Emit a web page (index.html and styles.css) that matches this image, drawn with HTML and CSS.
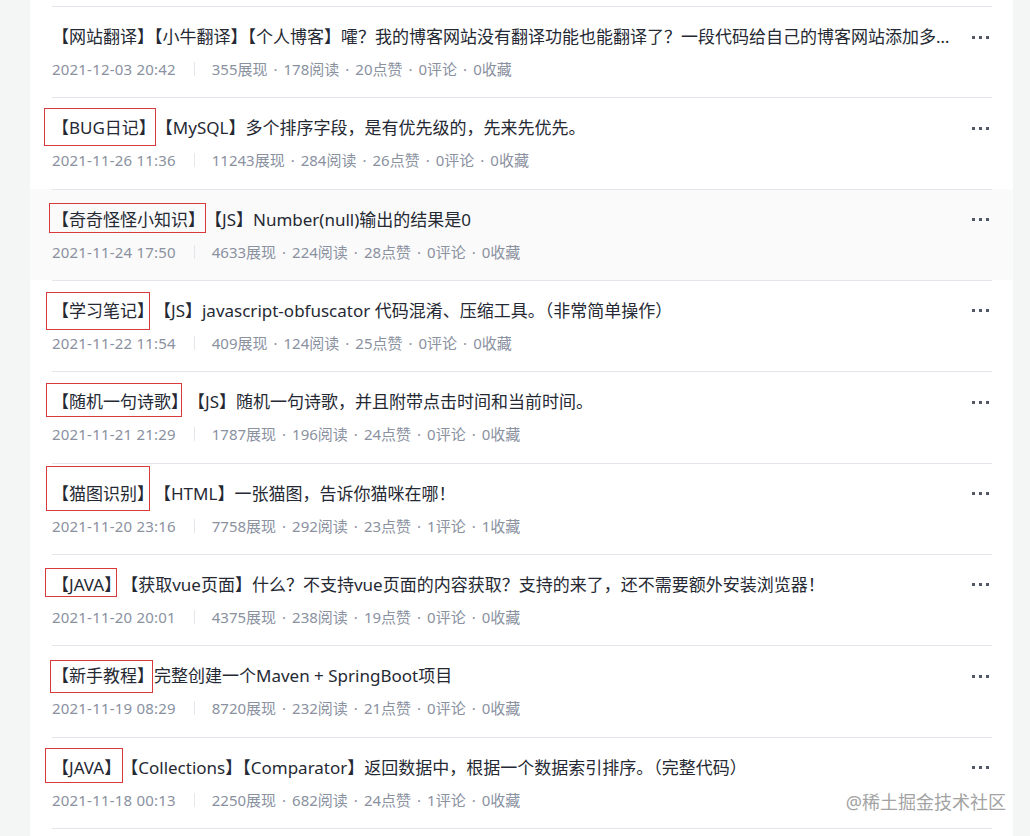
FILE: index.html
```html
<!DOCTYPE html>
<html lang="zh-CN">
<head>
  <meta charset="UTF-8">
  <meta name="viewport" content="width=device-width, initial-scale=1.0">
  <title>文章列表</title>
  <link rel="stylesheet" href="styles.css">
</head>
<body>
  <div class="page">
    <div class="card">
      <ul class="entry-list">
        <li class="entry">
          <div class="entry-inner">
            <div class="entry-title">
              <span class="title-text clamp">【网站翻译】【小牛翻译】【个人博客】嚯？我的博客网站没有翻译功能也能翻译了？一段代码给自己的博客网站添加多语言翻译功能</span>
              <span class="more"><i></i><i></i><i></i></span>
            </div>
            <div class="entry-meta">
              <span class="date">2021-12-03 20:42</span><span class="split"></span>
              <span>355展现</span><span class="dot">·</span><span>178阅读</span><span class="dot">·</span><span>20点赞</span><span class="dot">·</span><span>0评论</span><span class="dot">·</span><span>0收藏</span>
            </div>
          </div>
        </li>
        <li class="entry">
          <div class="entry-inner">
            <div class="entry-title">
              <span class="title-text"><span class="tag mark-2">【BUG日记】</span>【MySQL】多个排序字段，是有优先级的，先来先优先。</span>
              <span class="more"><i></i><i></i><i></i></span>
            </div>
            <div class="entry-meta">
              <span class="date">2021-11-26 11:36</span><span class="split"></span>
              <span>11243展现</span><span class="dot">·</span><span>284阅读</span><span class="dot">·</span><span>26点赞</span><span class="dot">·</span><span>0评论</span><span class="dot">·</span><span>0收藏</span>
            </div>
          </div>
        </li>
        <li class="entry hover">
          <div class="entry-inner">
            <div class="entry-title">
              <span class="title-text"><span class="tag mark-3">【奇奇怪怪小知识】</span>【JS】Number(null)输出的结果是0</span>
              <span class="more"><i></i><i></i><i></i></span>
            </div>
            <div class="entry-meta">
              <span class="date">2021-11-24 17:50</span><span class="split"></span>
              <span>4633展现</span><span class="dot">·</span><span>224阅读</span><span class="dot">·</span><span>28点赞</span><span class="dot">·</span><span>0评论</span><span class="dot">·</span><span>0收藏</span>
            </div>
          </div>
        </li>
        <li class="entry">
          <div class="entry-inner">
            <div class="entry-title">
              <span class="title-text"><span class="tag mark-4">【学习笔记】</span>【JS】javascript-obfuscator 代码混淆、压缩工具。（非常简单操作）</span>
              <span class="more"><i></i><i></i><i></i></span>
            </div>
            <div class="entry-meta">
              <span class="date">2021-11-22 11:54</span><span class="split"></span>
              <span>409展现</span><span class="dot">·</span><span>124阅读</span><span class="dot">·</span><span>25点赞</span><span class="dot">·</span><span>0评论</span><span class="dot">·</span><span>0收藏</span>
            </div>
          </div>
        </li>
        <li class="entry">
          <div class="entry-inner">
            <div class="entry-title">
              <span class="title-text"><span class="tag mark-5">【随机一句诗歌】</span>【JS】随机一句诗歌，并且附带点击时间和当前时间。</span>
              <span class="more"><i></i><i></i><i></i></span>
            </div>
            <div class="entry-meta">
              <span class="date">2021-11-21 21:29</span><span class="split"></span>
              <span>1787展现</span><span class="dot">·</span><span>196阅读</span><span class="dot">·</span><span>24点赞</span><span class="dot">·</span><span>0评论</span><span class="dot">·</span><span>0收藏</span>
            </div>
          </div>
        </li>
        <li class="entry">
          <div class="entry-inner">
            <div class="entry-title">
              <span class="title-text"><span class="tag mark-6">【猫图识别】</span>【HTML】一张猫图，告诉你猫咪在哪！</span>
              <span class="more"><i></i><i></i><i></i></span>
            </div>
            <div class="entry-meta">
              <span class="date">2021-11-20 23:16</span><span class="split"></span>
              <span>7758展现</span><span class="dot">·</span><span>292阅读</span><span class="dot">·</span><span>23点赞</span><span class="dot">·</span><span>1评论</span><span class="dot">·</span><span>1收藏</span>
            </div>
          </div>
        </li>
        <li class="entry">
          <div class="entry-inner">
            <div class="entry-title">
              <span class="title-text"><span class="tag mark-7">【JAVA】</span>【获取vue页面】什么？不支持vue页面的内容获取？支持的来了，还不需要额外安装浏览器！</span>
              <span class="more"><i></i><i></i><i></i></span>
            </div>
            <div class="entry-meta">
              <span class="date">2021-11-20 20:01</span><span class="split"></span>
              <span>4375展现</span><span class="dot">·</span><span>238阅读</span><span class="dot">·</span><span>19点赞</span><span class="dot">·</span><span>0评论</span><span class="dot">·</span><span>0收藏</span>
            </div>
          </div>
        </li>
        <li class="entry">
          <div class="entry-inner">
            <div class="entry-title">
              <span class="title-text"><span class="tag mark-8">【新手教程】</span>完整创建一个Maven + SpringBoot项目</span>
              <span class="more"><i></i><i></i><i></i></span>
            </div>
            <div class="entry-meta">
              <span class="date">2021-11-19 08:29</span><span class="split"></span>
              <span>8720展现</span><span class="dot">·</span><span>232阅读</span><span class="dot">·</span><span>21点赞</span><span class="dot">·</span><span>0评论</span><span class="dot">·</span><span>0收藏</span>
            </div>
          </div>
        </li>
        <li class="entry">
          <div class="entry-inner">
            <div class="entry-title">
              <span class="title-text"><span class="tag mark-9">【JAVA】</span>【Collections】【Comparator】返回数据中，根据一个数据索引排序。（完整代码）</span>
              <span class="more"><i></i><i></i><i></i></span>
            </div>
            <div class="entry-meta">
              <span class="date">2021-11-18 00:13</span><span class="split"></span>
              <span>2250展现</span><span class="dot">·</span><span>682阅读</span><span class="dot">·</span><span>24点赞</span><span class="dot">·</span><span>1评论</span><span class="dot">·</span><span>0收藏</span>
            </div>
          </div>
        </li>
      </ul>
    </div>
    <div class="watermark">@稀土掘金技术社区</div>
  </div>
</body>
</html>
```

FILE: styles.css
```css
/* Base */
* {
  margin: 0;
  padding: 0;
  box-sizing: border-box;
}

body {
  background-color: #f4f5f5;
  font-family: "Noto Sans", "Noto Sans CJK SC", sans-serif;
  color: #252933;
  overflow: hidden;
}

.page {
  position: relative;
  height: 836px;
  padding: 0 17px 0 30px;
}

.card {
  background-color: #fff;
  height: 100%;
  padding-top: 6px;
}

/* List */
.entry-list {
  list-style: none;
}

.entry {
  padding: 0 21px 0 22px;
}

.entry.hover {
  background-color: #fafafa;
}

.entry-inner {
  border-top: 1px solid #e5e6eb;
  padding: 18px 0 17.33px;
}

.entry:last-child .entry-inner {
  border-bottom: 1px solid #e5e6eb;
}

.entry-title {
  display: flex;
  align-items: center;
  height: 24px;
}

.title-text {
  flex: 1;
  min-width: 0;
  font-size: 17px;
  line-height: 24px;
  color: #252933;
  white-space: nowrap;
}

.title-text.clamp {
  overflow: hidden;
  text-overflow: ellipsis;
}

.more {
  display: flex;
  gap: 4px;
  margin-left: 15px;
  margin-right: 3px;
}

.more i {
  display: block;
  width: 3px;
  height: 3px;
  background-color: #515767;
}

.entry-meta {
  display: flex;
  align-items: center;
  margin-top: 9px;
  height: 22px;
  font-size: 15px;
  line-height: 22px;
  color: #8a919f;
  white-space: nowrap;
}

.date {
  letter-spacing: 0.2px;
}

.split {
  width: 1px;
  height: 14px;
  margin: 0 17px 0 18px;
  background-color: #e4e6eb;
}

.dot {
  margin: 0 6px;
}

/* Annotation boxes */
.tag {
  position: relative;
  display: inline-block;
}

.tag::after {
  content: "";
  position: absolute;
  border: 1px solid #d8393b;
}

.mark-2::after { top: -8px; bottom: -6px; left: -8px; right: 0; }
.mark-3::after { top: -5px; bottom: -1px; left: -3px; right: -1px; }
.mark-4::after { top: -7px; bottom: -7px; left: -6px; right: 4px; }
.mark-5::after { top: -7px; bottom: -3px; left: -6px; right: 6px; }
.mark-6::after { top: -16px; bottom: -5px; left: -6px; right: 4px; }
.mark-7::after { top: -5px; bottom: 0; left: -7px; right: 4px; }
.mark-8::after { top: -4px; bottom: -5px; left: -2px; right: 1px; }
.mark-9::after { top: -8px; bottom: -3px; left: -7px; right: -2px; }

/* Watermark */
.watermark {
  position: absolute;
  right: 24px;
  bottom: 22px;
  font-size: 18px;
  color: #a3a3a3;
  text-shadow: 0 0 1px #fff;
}
```
